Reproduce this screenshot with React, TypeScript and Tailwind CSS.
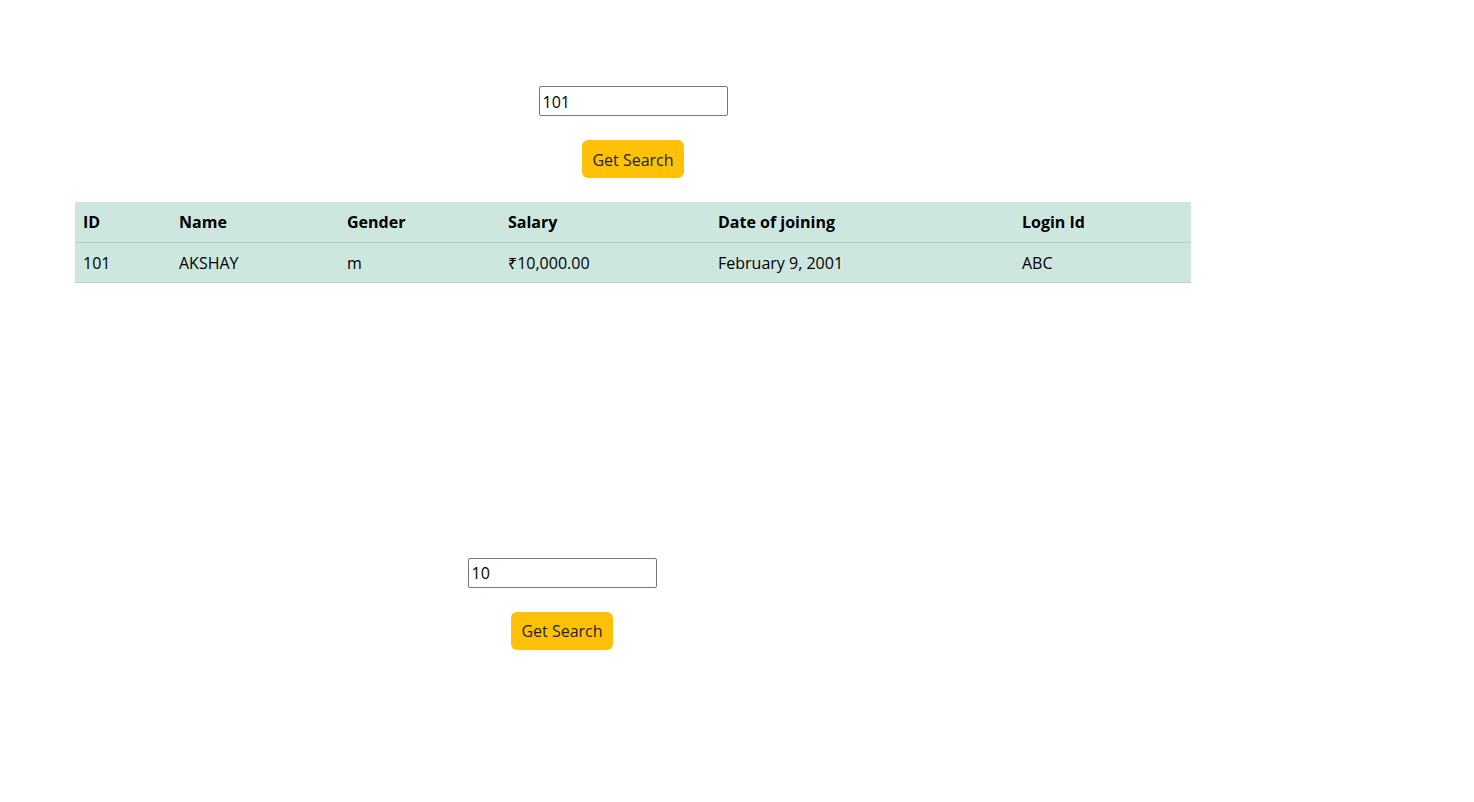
import React from "react";

function Search({ value }: { value: string }) {
  return (
    <div className="flex flex-col items-center">
      <input
        defaultValue={value}
        className="h-[30px] w-[189px] rounded-[2px] border border-[#767676] px-[3px] pt-[1px] text-base text-black outline-none"
      />
      <button className="mt-[24px] h-[38px] w-[102px] rounded-[6px] bg-[#ffc107] pt-[1px] text-base text-[#212529]">
        Get Search
      </button>
    </div>
  );
}

export default function App() {
  const cols = [
    { h: "ID", v: "101", w: "w-[96px]" },
    { h: "Name", v: "AKSHAY", w: "w-[168px]" },
    { h: "Gender", v: "m", w: "w-[161px]" },
    { h: "Salary", v: "₹10,000.00", w: "w-[210px]" },
    { h: "Date of joining", v: "February 9, 2001", w: "w-[304px]" },
    { h: "Login Id", v: "ABC", w: "w-[177px]" },
  ];
  return (
    <div
      className="min-h-[802px] bg-white text-[#212529]"
      style={{ fontFamily: '"Segoe UI", "Open Sans", "Noto Sans", sans-serif' }}
    >
      <div className="w-[1116px] ml-[75px] pt-[86px]">
        <Search value="101" />
        <table className="mt-[24px] w-[1116px] table-fixed border-collapse bg-[#cde7de] text-base text-black">
          <thead>
            <tr className="border-b border-[#b8d1c8]">
              {cols.map((c) => (
                <th key={c.h} className={`${c.w} h-[40px] px-[8px] text-left font-bold`}>
                  {c.h}
                </th>
              ))}
            </tr>
          </thead>
          <tbody>
            <tr className="border-b border-[#b8d1c8]">
              {cols.map((c) => (
                <td key={c.h} className="h-[40px] px-[8px] pt-[2px] text-left">
                  {c.v}
                </td>
              ))}
            </tr>
          </tbody>
        </table>
      </div>
      <div className="ml-[4px] w-[1116px] pt-[275px]">
        <Search value="10" />
      </div>
    </div>
  );
}
